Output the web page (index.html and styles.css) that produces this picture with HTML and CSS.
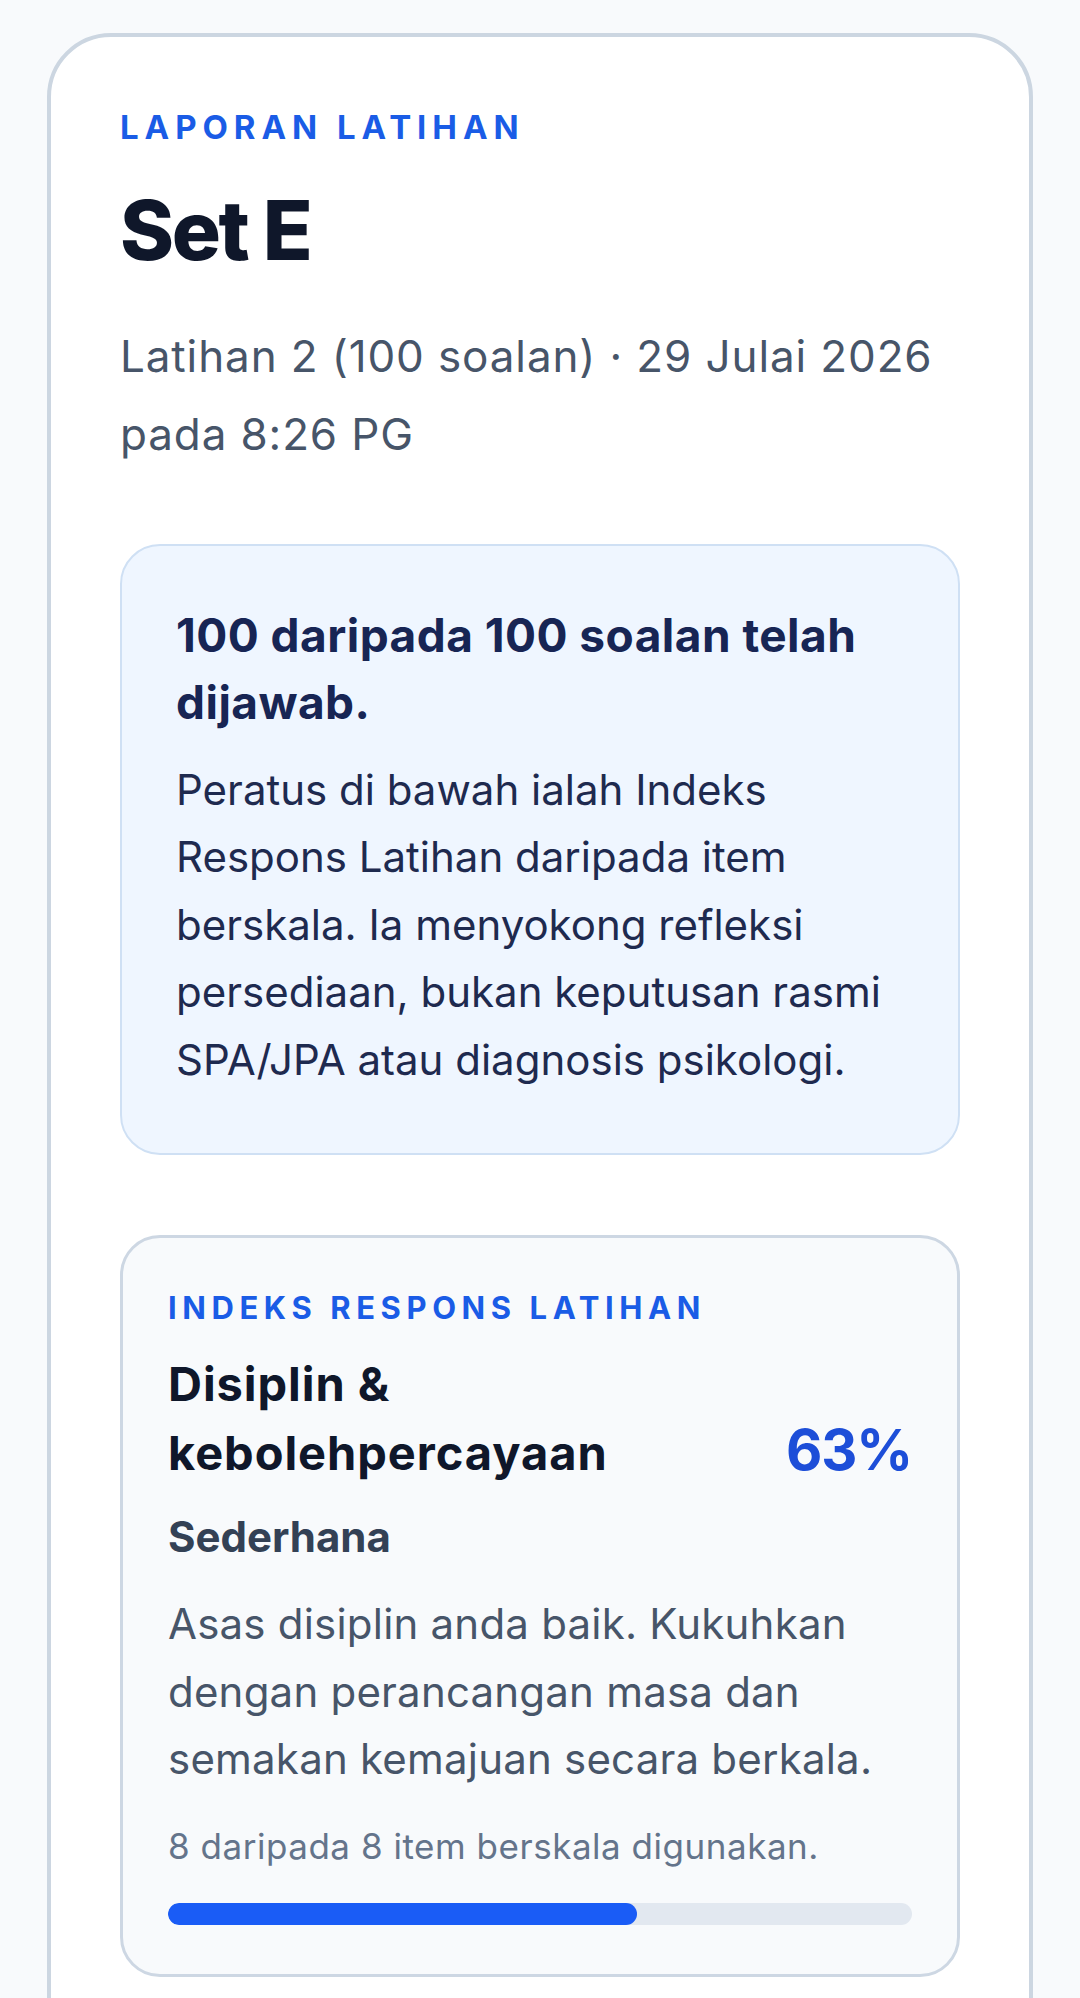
FILE: index.html
```html
<!DOCTYPE html>
<html lang="ms">
<head>
    <meta charset="UTF-8">
    <meta name="viewport" content="width=device-width, initial-scale=1.0">
    <title>Laporan Latihan - Set E</title>
    <link rel="stylesheet" href="styles.css">
</head>
<body>
    <main class="page">
        <section class="report">
            <div class="eyebrow">Laporan Latihan</div>
            <h1 class="report-title">Set E</h1>
            <p class="report-meta">Latihan 2 (100 soalan) · 29 Julai 2026 pada 8:26 PG</p>

            <div class="notice">
                <h2 class="notice-title">100 daripada 100 soalan telah dijawab.</h2>
                <p class="notice-text">Peratus di bawah ialah Indeks Respons Latihan daripada item berskala. Ia menyokong refleksi persediaan, bukan keputusan rasmi SPA/JPA atau diagnosis psikologi.</p>
            </div>

            <div class="index-card">
                <div class="index-label">Indeks Respons Latihan</div>
                <div class="index-head">
                    <h3 class="index-name">Disiplin &amp; kebolehpercayaan</h3>
                    <div class="index-score">63%</div>
                </div>
                <div class="index-level">Sederhana</div>
                <p class="index-text">Asas disiplin anda baik. Kukuhkan dengan perancangan masa dan semakan kemajuan secara berkala.</p>
                <div class="index-count">8 daripada 8 item berskala digunakan.</div>
                <div class="bar">
                    <div class="bar-fill" style="width: 63%"></div>
                </div>
            </div>
        </section>
    </main>
</body>
</html>
```

FILE: styles.css
```css
body {
    margin: 0;
    background-color: #f8fafc;
    font-family: Inter, "Noto Sans", sans-serif;
    color: #0f172a;
}
.page {
    padding: 33px 47px 0;
}
.report {
    background: #fff;
    border: 4px solid #ccd6e1;
    border-radius: 64px;
    padding: 67px 69px 90px;
}
.eyebrow {
    font-size: 33px;
    line-height: 1.4;
    font-weight: 700;
    letter-spacing: 0.18em;
    text-transform: uppercase;
    color: #1a5ce6;
}
.report-title {
    margin: 32px 0 0;
    font-size: 82px;
    line-height: 1.2;
    font-weight: 800;
    letter-spacing: -0.03em;
    color: #0f172a;
}
.report-meta {
    margin: 36px 0 0;
    font-size: 44px;
    line-height: 78px;
    letter-spacing: 0.02em;
    color: #475569;
}
.notice {
    margin-top: 71px;
    background: #eff6ff;
    border: 2px solid #cfe0f4;
    border-radius: 40px;
    padding: 56px 54px 60px;
}
.notice-title {
    margin: 0;
    font-size: 46px;
    line-height: 67px;
    font-weight: 700;
    letter-spacing: 0.01em;
    color: #172554;
}
.notice-text {
    margin: 20px 0 0;
    font-size: 42px;
    line-height: 67.5px;
    color: #1e2a4f;
}
.index-card {
    margin-top: 80px;
    background: #f8fafc;
    border: 3px solid #cdd7e3;
    border-radius: 40px;
    padding: 48px 45px 49px;
}
.index-label {
    font-size: 31px;
    line-height: 1.4;
    font-weight: 700;
    letter-spacing: 0.18em;
    text-transform: uppercase;
    color: #1a5ce6;
}
.index-head {
    display: flex;
    justify-content: space-between;
    align-items: last baseline;
    gap: 24px;
    margin-top: 20px;
}
.index-name {
    margin: 0;
    max-width: 500px;
    font-size: 47px;
    line-height: 69px;
    font-weight: 700;
    letter-spacing: 0.02em;
    color: #0f172a;
}
.index-score {
    font-size: 56px;
    line-height: 1.2;
    font-weight: 700;
    letter-spacing: -0.02em;
    color: #1d4ed8;
}
.index-level {
    margin-top: 18px;
    font-size: 42px;
    line-height: 63px;
    font-weight: 700;
    color: #334155;
}
.index-text {
    margin: 22px 0 0;
    font-size: 42px;
    line-height: 67.5px;
    letter-spacing: 0.005em;
    color: #475569;
}
.index-count {
    margin-top: 28px;
    font-size: 35px;
    line-height: 51px;
    letter-spacing: 0.015em;
    color: #64748b;
}
.bar {
    margin-top: 31px;
    height: 22px;
    border-radius: 11px;
    background: #e2e8f0;
    overflow: hidden;
}
.bar-fill {
    height: 100%;
    border-radius: 11px;
    background: #1a5cf6;
}
```
